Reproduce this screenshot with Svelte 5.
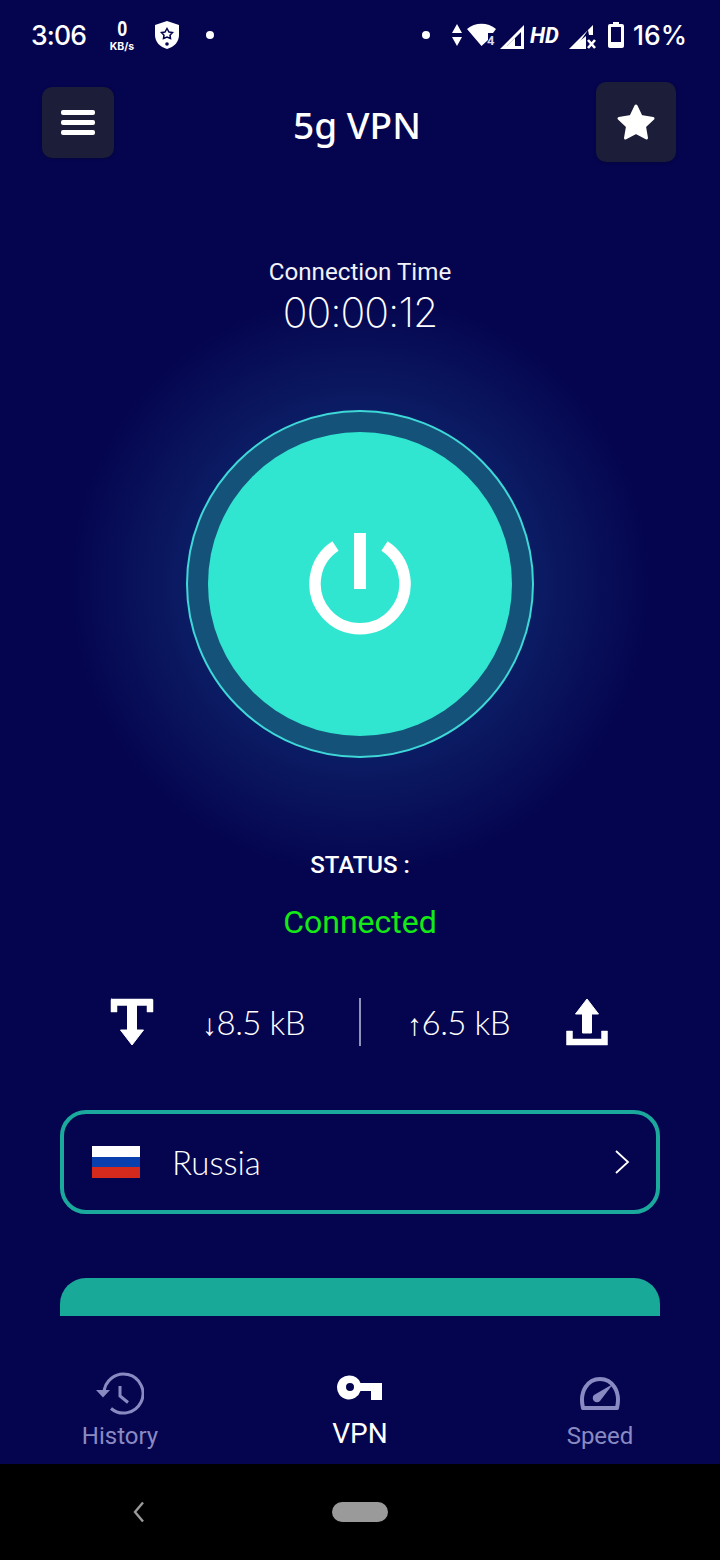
<script lang="ts">
	let time = '00:00:12';
	let status = 'Connected';
	let country = 'Russia';
</script>

<div class="screen">
	<div class="statusbar">
		<div class="sb-left">
			<span class="clock">3:06</span>
			<span class="speed"><b>0</b><small>KB/s</small></span>
			<svg class="shield" width="26" height="30" viewBox="0 0 26 30">
				<path d="M13 1 L25 5 V15 C25 22 20 27 13 29 C6 27 1 22 1 15 V5 Z" fill="#fff" />
				<path d="M13 8.5 L15 12 L18.5 12.6 L16 15.2 L16.5 18.5 L13 17 L9.5 18.5 L10 15.2 L7.5 12.6 L11 12 Z" fill="none" stroke="#05054f" stroke-width="1.5" />
				<circle cx="13" cy="24" r="1.8" fill="#05054f" />
			</svg>
			<span class="dot"></span>
		</div>
		<div class="sb-right">
			<span class="dot"></span>
			<svg class="sb-data" width="12" height="24" viewBox="0 0 12 24">
				<path d="M6 1 L11 10 H1 Z M6 23 L1 14 H11 Z" fill="#fff" />
			</svg>
			<svg class="sb-wifi" width="30" height="24" viewBox="0 0 30 24">
				<path d="M0 6 C8 -1 21 -1 29 6 L26 10 H21 V17 L14.500 23 Z" fill="#fff" />
				<text x="20" y="22" class="wifi-4">4</text>
			</svg>
			<svg class="sb-signal" width="26" height="26" viewBox="0 0 26 26">
				<path d="M25 1 V25 H1 Z M22 8 L8 22 H22 Z" fill="#fff" fill-rule="evenodd" />
				<path d="M16 14 L8 22 H16 Z" fill="#fff" />
			</svg>
			<span class="hd">HD</span>
			<svg class="sb-signal2" width="28" height="26" viewBox="0 0 28 26">
				<path d="M24 1 V11 H20 L19 6 L6 25 H0 Z" fill="#fff" />
				<path d="M17 12 V25 H1 Z" fill="#fff" />
				<path d="M19 16 L26 24 M26 16 L19 24" stroke="#fff" stroke-width="2.6" />
			</svg>
			<svg class="sb-batt" width="16" height="26" viewBox="0 0 16 26">
				<path d="M5 0 H11 V2 H14 Q16 2 16 4 V24 Q16 26 14 26 H2 Q0 26 0 24 V4 Q0 2 2 2 H5 Z M3 5 V20 H13 V5 Z" fill="#fff" fill-rule="evenodd" />
			</svg>
			<span class="pct">16%</span>
		</div>
	</div>

	<header>
		<button class="menu" aria-label="Menu">
			<span></span><span></span><span></span>
		</button>
		<h1>5g VPN</h1>
		<button class="fav" aria-label="Favourites">
			<svg width="40" height="38" viewBox="0 0 40 38">
				<path d="M20 3 L25 13.500 L37 15.500 L28.500 23.500 L30.500 35 L20 29.500 L9.500 35 L11.500 23.500 L3 15.500 L15 13.500 Z" fill="#fff" stroke="#fff" stroke-width="3" stroke-linejoin="round" />
			</svg>
		</button>
	</header>

	<main>
		<p class="conn-label">Connection Time</p>
		<p class="conn-time">{time}</p>

		<div class="power-ring">
			<div class="power">
				<svg width="104" height="104" viewBox="0 0 104 104">
					<path d="M27.5 14 A45 45 0 1 0 76.5 14" fill="none" stroke="#fff" stroke-width="11.5" />
					<rect x="46" y="1" width="12" height="56" fill="#fff" />
				</svg>
			</div>
		</div>

		<p class="status-label">STATUS :</p>
		<p class="status">{status}</p>

		<div class="stats">
			<svg class="stat-icon" width="44" height="48" viewBox="0 0 44 48">
				<path d="M1 1 H42 Q43 1 43 2 V14 H37 V7.500 H7 V14 H1 V2 Q1 1 2 1 Z" fill="#fff" stroke="#fff" stroke-width="0.5" stroke-linejoin="round" />
				<path d="M17.500 6 H26.500 V32 H33.500 L22 47 L10.500 32 H17.500 Z" fill="#fff" stroke="#fff" stroke-width="1" stroke-linejoin="round" />
			</svg>
			<span class="down"><i>↓</i>8.5 kB</span>
			<span class="divider"></span>
			<span class="up"><i>↑</i>6.5 kB</span>
			<svg class="stat-icon" width="44" height="48" viewBox="0 0 44 48">
				<path d="M22 1 L33.500 16 H26.500 V35 H17.500 V16 H10.500 Z" fill="#fff" stroke="#fff" stroke-width="1" stroke-linejoin="round" />
				<path d="M1.500 33 H7.500 V41 H36.500 V33 H42.500 V47 H1.500 Z" fill="#fff" stroke="#fff" stroke-width="0.5" stroke-linejoin="round" />
			</svg>
		</div>

		<div class="country">
			<span class="flag"><i></i><i></i><i></i></span>
			<span class="name">{country}</span>
			<svg width="16" height="26" viewBox="0 0 16 26">
				<path d="M2 2 L14 13 L2 24" fill="none" stroke="#fff" stroke-width="1.8" />
			</svg>
		</div>

		<div class="cta"></div>
	</main>

	<nav>
		<div class="tab">
			<div class="tab-icon">
				<svg width="48" height="43" viewBox="0 0 48 43">
					<path d="M8 21.500 A19.500 19.500 0 1 1 15 36.500" fill="none" stroke="#8a8ac2" stroke-width="3" />
					<path d="M0 18 H14 L7 25.500 Z" fill="#8a8ac2" />
					<path d="M24 14 V24 L32 30.500" fill="none" stroke="#8a8ac2" stroke-width="3" />
				</svg>
			</div>
			<span>History</span>
		</div>
		<div class="tab active">
			<div class="tab-icon">
				<svg class="key" width="46" height="26" viewBox="0 0 46 26">
					<path d="M12.500 0.500 A12 12 0 0 1 23.500 8 H45 V25 H34 V16 H23.500 A12 12 0 1 1 12.500 0.500 Z M13 8 A4 4 0 1 0 13 16 A4 4 0 1 0 13 8 Z" fill="#fff" fill-rule="evenodd" />
				</svg>
			</div>
			<span>VPN</span>
		</div>
		<div class="tab">
			<div class="tab-icon">
				<svg width="42" height="35" viewBox="0 0 42 35">
					<path d="M4 32 C0 15 9 3 21 3 C33 3 42 15 38 32 Z" fill="none" stroke="#8a8ac2" stroke-width="4" stroke-linejoin="round" />
					<path d="M34 8 L21 25 A4 4 0 0 1 15 19 Z" fill="#8a8ac2" />
				</svg>
			</div>
			<span>Speed</span>
		</div>
	</nav>

	<div class="sysnav">
		<svg class="back" width="14" height="22" viewBox="0 0 14 22">
			<path d="M11 1.500 L3 11 L11 20.500" fill="none" stroke="#9a9a9a" stroke-width="2.4" />
		</svg>
		<span class="home"></span>
	</div>
</div>

<style>
	:global(body) {
		margin: 0;
		background: #05054f;
	}

	.screen {
		width: 720px;
		height: 1560px;
		display: flex;
		flex-direction: column;
		background: #05054f;
		color: #fff;
		font-family: Roboto, sans-serif;
		overflow: hidden;
	}

	p {
		margin: 0;
	}

	.statusbar {
		height: 70px;
		display: flex;
		justify-content: space-between;
		align-items: center;
		padding: 0 33px 0 31px;
		box-sizing: border-box;
		flex: none;
	}

	.sb-left,
	.sb-right {
		display: flex;
		align-items: center;
	}

	.clock {
		font-size: 26.5px;
		font-weight: 500;
		width: 77px;
		font-family: Inter, sans-serif;
		letter-spacing: -0.8px;
	}

	.speed {
		display: flex;
		flex-direction: column;
		align-items: center;
		width: 28px;
		line-height: 1;
	}

	.speed b {
		font-size: 19px;
		line-height: 22px;
		font-family: "Liberation Sans", sans-serif;
		transform: scale(0.95, 1.15);
	}

	.speed small {
		font-size: 10.5px;
		font-weight: 700;
		line-height: 13px;
		font-family: Inter, sans-serif;
	}

	.shield {
		margin-left: 18px;
	}

	.dot {
		width: 8px;
		height: 8px;
		border-radius: 50%;
		background: #fff;
	}

	.sb-left .dot {
		margin-left: 26px;
	}

	.sb-data {
		margin-left: 21px;
	}

	.sb-wifi {
		margin-left: 4px;
	}

	.wifi-4 {
		font-size: 13px;
		font-weight: 700;
		fill: #d8d8ea;
		font-family: Roboto, sans-serif;
	}

	.sb-signal {
		margin-left: 2px;
		margin-top: 3px;
	}

	.hd {
		font-size: 22px;
		font-weight: 700;
		font-style: italic;
		margin-left: 5px;
		font-family: Roboto, sans-serif;
		width: 29px;
	}

	.sb-signal2 {
		margin-left: 10px;
		margin-top: 3px;
	}

	.sb-batt {
		margin-left: 11px;
	}

	.pct {
		font-size: 26.5px;
		font-family: Inter, sans-serif;
		font-weight: 500;
		margin-left: 9px;
	}

	header {
		height: 104px;
		flex: none;
		display: grid;
		grid-template-columns: 1fr auto 1fr;
		align-items: center;
		padding: 0 44px 0 42px;
		box-sizing: border-box;
	}

	header button {
		border: 0;
		padding: 0;
		background: #1b1d39;
		border-radius: 10px;
		display: flex;
		flex-direction: column;
		align-items: center;
		justify-content: center;
		box-shadow: 0 1px 3px rgba(0, 0, 0, 0.25);
	}

	.menu {
		width: 72px;
		height: 71px;
		gap: 5px;
		justify-self: start;
	}

	.menu span {
		width: 34px;
		height: 5px;
		background: #fff;
		border-radius: 2px;
	}

	.fav {
		width: 80px;
		height: 80px;
		justify-self: end;
	}

	h1 {
		margin: 5px 4px 0 0;
		font-family: "Noto Sans", sans-serif;
		font-size: 37px;
		font-weight: 500;
		line-height: 1;
	}

	main {
		flex: 1;
		display: flex;
		flex-direction: column;
		align-items: center;
		background: radial-gradient(circle 290px at 360px 410px, #0f2d74 0%, #0d2269 50%, #05054f 100%);
	}

	.conn-label {
		margin-top: 84px;
		font-size: 24.2px;
		line-height: 28px;
		color: #f2f2f8;
	}

	.conn-time {
		font-family: Inter, sans-serif;
		font-weight: 200;
		font-size: 41px;
		line-height: 50px;
		margin-top: 1px;
		letter-spacing: -1px;
	}

	.power-ring {
		margin-top: 73px;
		width: 348px;
		height: 348px;
		box-sizing: border-box;
		border: 2px solid #3fd8d8;
		border-radius: 50%;
		background: #14527a;
		display: flex;
		align-items: center;
		justify-content: center;
		flex: none;
	}

	.power {
		width: 304px;
		height: 304px;
		border-radius: 50%;
		background: #31e6d0;
		display: flex;
		align-items: center;
		justify-content: center;
	}

	.status-label {
		margin-top: 93px;
		font-size: 24px;
		line-height: 28px;
		font-weight: 500;
	}

	.status {
		margin-top: 24px;
		font-size: 32px;
		line-height: 38px;
		color: #14ea14;
	}

	.stats {
		margin-top: 57px;
		width: 500px;
		height: 48px;
		display: flex;
		align-items: center;
		font-family: Lato, sans-serif;
		font-weight: 300;
		font-size: 33px;
		letter-spacing: -0.5px;
		flex: none;
	}

	.stats i {
		font-style: normal;
		font-size: 30px;
		font-family: "Liberation Sans", sans-serif;
		font-weight: 400;
	}

	.stat-icon {
		flex: none;
	}

	.down {
		margin-left: 48px;
		width: 108px;
		white-space: nowrap;
	}

	.divider {
		width: 2px;
		height: 48px;
		background: #8f93b8;
		margin-left: 49px;
	}

	.up {
		margin-left: 46px;
		width: 103px;
		white-space: nowrap;
	}

	.up + .stat-icon {
		margin-left: 55px;
	}

	.country {
		margin-top: 64px;
		width: 600px;
		height: 104px;
		flex: none;
		box-sizing: border-box;
		border: 4px solid #1aa99c;
		border-radius: 26px;
		display: flex;
		align-items: center;
		padding: 0 26px 0 28px;
	}

	.flag {
		width: 48px;
		height: 32px;
		display: flex;
		flex-direction: column;
	}

	.flag i {
		flex: 1;
	}

	.flag i:nth-child(1) {
		background: #fff;
	}

	.flag i:nth-child(2) {
		background: #0a3fae;
	}

	.flag i:nth-child(3) {
		background: #d42a1e;
	}

	.name {
		flex: 1;
		margin-left: 32px;
		font-family: Lato, sans-serif;
		font-weight: 300;
		font-size: 33px;
	}

	.cta {
		margin-top: 64px;
		width: 600px;
		height: 38px;
		flex: none;
		background: #18a999;
		border-radius: 26px 26px 0 0;
	}

	nav {
		height: 148px;
		flex: none;
		display: grid;
		grid-template-columns: 240px 240px 240px;
		box-sizing: border-box;
	}

	.tab {
		display: flex;
		flex-direction: column;
		align-items: center;
		padding-top: 52px;
		box-sizing: border-box;
		color: #8a8ac2;
		font-size: 24px;
		line-height: 30px;
		gap: 3px;
	}

	.tab-icon {
		height: 50px;
		display: flex;
		align-items: center;
	}

	.tab.active {
		color: #fff;
		font-size: 28px;
		gap: 1px;
	}

	.key {
		margin-bottom: 10px;
	}

	.sysnav {
		height: 96px;
		flex: none;
		background: #000;
		display: flex;
		align-items: center;
		padding-left: 132px;
	}

	.home {
		width: 56px;
		height: 20px;
		border-radius: 10px;
		background: #9a9a9a;
		margin-left: 186px;
	}
</style>
